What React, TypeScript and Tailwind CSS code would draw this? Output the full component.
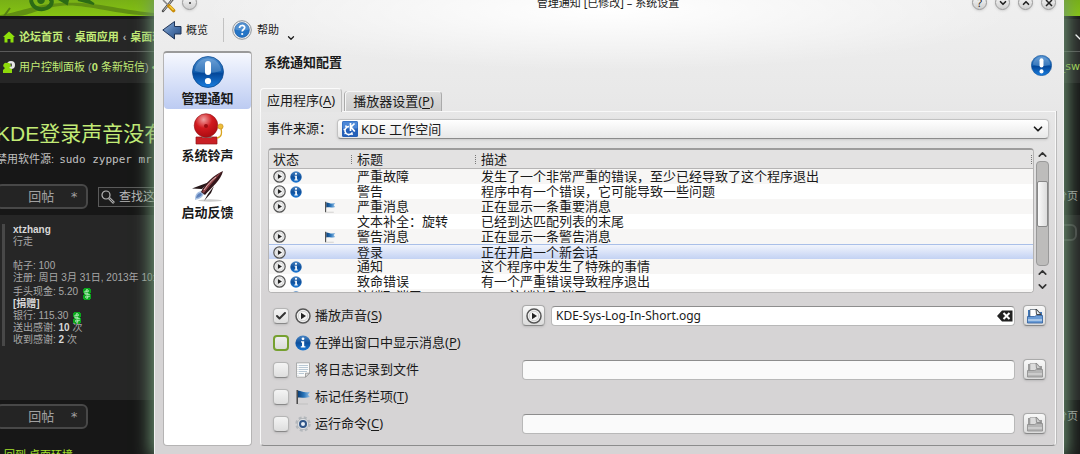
import { useState, type ReactNode } from "react";
import { ChevronDown, ChevronUp, Check } from "lucide-react";

const uiFont = "font-['Noto_Sans','Noto_Sans_CJK_SC',sans-serif]";
const webFont = "font-['Liberation_Sans','Noto_Sans_CJK_SC',sans-serif]";

function AlertIcon({ className }: { className: string }) {
  return (
    <svg viewBox="0 0 32 32" className={className} aria-hidden="true">
      <defs>
        <linearGradient id="alertBlue" x1="0" y1="0" x2="0" y2="1">
          <stop offset="0" stopColor="#4f8fd0" />
          <stop offset="0.5" stopColor="#0f5cae" />
          <stop offset="0.55" stopColor="#05489a" />
          <stop offset="1" stopColor="#1a7fe0" />
        </linearGradient>
      </defs>
      <circle cx="16" cy="16" r="15.5" fill="url(#alertBlue)" stroke="#0d4a90" strokeWidth="0.8" />
      <path d="M3 15a13 12.5 0 0 1 26 0q-13 4-26 0z" fill="#fff" opacity="0.18" />
      <rect x="13" y="5" width="6" height="14" rx="3" fill="#fff" />
      <circle cx="16" cy="25" r="3.1" fill="#fff" />
    </svg>
  );
}

function InfoIcon({ className }: { className: string }) {
  return (
    <svg viewBox="0 0 16 16" className={className} aria-hidden="true">
      <defs>
        <linearGradient id="infoBlue" x1="0" y1="0" x2="0" y2="1">
          <stop offset="0" stopColor="#4a86c4" />
          <stop offset="0.5" stopColor="#0d4f9c" />
          <stop offset="1" stopColor="#1b79d6" />
        </linearGradient>
      </defs>
      <circle cx="8" cy="8" r="7.6" fill="url(#infoBlue)" />
      <circle cx="8" cy="3.8" r="1.4" fill="#fff" />
      <path d="M6 6.2h3.2v5h1.2v1.3H5.8v-1.3H7V7.4H6z" fill="#fff" />
    </svg>
  );
}

function PlayIcon({ className }: { className: string }) {
  return (
    <svg viewBox="0 0 16 16" className={className} aria-hidden="true">
      <circle cx="8" cy="8" r="7" fill="#f4f4f4" stroke="#555" strokeWidth="1.5" />
      <circle cx="8" cy="8" r="4.8" fill="none" stroke="#c4c4c4" strokeWidth="0.8" />
      <path d="M6 4.8l5 3.2-5 3.2z" fill="#222" />
    </svg>
  );
}

function FlagIcon({ className }: { className: string }) {
  return (
    <svg viewBox="0 0 16 16" className={className} aria-hidden="true">
      <defs>
        <linearGradient id="flagBlue" x1="0" y1="0" x2="1" y2="0">
          <stop offset="0" stopColor="#0b3f78" />
          <stop offset="0.5" stopColor="#2a75ba" />
          <stop offset="1" stopColor="#9cc4e8" />
        </linearGradient>
      </defs>
      <path d="M3 1.5c4 1 6 2.5 12 1.2l-2 3 2 2.3C9.500 9.500 7 8 3 8.500z" fill="url(#flagBlue)" />
      <path d="M2.200 1v14" stroke="#333" strokeWidth="1.300" />
      <path d="M3 15h10" stroke="#bbb" strokeWidth="0.800" />
    </svg>
  );
}

function NoteIcon({ className }: { className: string }) {
  return (
    <svg viewBox="0 0 16 16" className={className} aria-hidden="true">
      <path d="M1.500 .8h13v10.400l-4 4h-9z" fill="#fbfbfb" stroke="#a5a5a5" strokeWidth="0.900" />
      <path d="M4 3.500h9M4 5.500h9M4 7.500h9M4 9.500h8M4 11.500h5" stroke="#a9bccb" strokeWidth="0.800" />
      <path d="M3 1v14" stroke="#c9d4dc" strokeDasharray="1 1" />
      <path d="M14.500 11.200h-4v4z" fill="#ddd" stroke="#888" strokeWidth="0.700" />
    </svg>
  );
}

function GearIcon({ className }: { className: string }) {
  return (
    <svg viewBox="0 0 16 16" className={className} aria-hidden="true">
      <circle cx="8" cy="8" r="6.300" fill="none" stroke="#b4b8bc" strokeWidth="2.800" strokeDasharray="2.800 2.150" />
      <circle cx="8" cy="8" r="5.600" fill="#dfe2e5" stroke="#a9adb2" strokeWidth="0.700" />
      <circle cx="8" cy="8" r="3" fill="#e8f0f8" stroke="#2f5688" strokeWidth="2" />
    </svg>
  );
}

function OpenIcon({ active }: { active: boolean }) {
  return (
    <svg viewBox="0 0 18 18" className="size-[18px]" aria-hidden="true">
      <path d="M2 3h3v9H2zM13 5h3v7h-3z" fill={active ? "#3f76b8" : "#9b9b9b"} />
      <path d="M4 2.500h7l4 5V12H4z" fill={active ? "#fff" : "#dcdcdc"} stroke={active ? "#52606e" : "#a2a2a2"} strokeWidth="0.700" />
      <path d="M10 2l5 5.500h-4.500z" fill={active ? "#e4edf5" : "#cfcfcf"} stroke={active ? "#333" : "#888"} strokeWidth="0.900" />
      <path d="M1.500 9.500h7l2-1h6v7.500h-15z" fill={active ? "#6b9cd6" : "#b5b5b5"} stroke={active ? "#2b5c9c" : "#8c8c8c"} strokeWidth="0.800" />
      <path d="M2 13h14" stroke={active ? "#e3effa" : "#e2e2e2"} />
    </svg>
  );
}

function BellIcon() {
  return (
    <svg viewBox="0 0 32 32" className="size-8" aria-hidden="true">
      <defs>
        <radialGradient id="bellRed" cx="0.400" cy="0.250" r="0.800">
          <stop offset="0" stopColor="#f0a0a0" />
          <stop offset="0.450" stopColor="#d21a1f" />
          <stop offset="1" stopColor="#a80a10" />
        </radialGradient>
      </defs>
      <path d="M4 24h21v7H4z" fill="#c92026" stroke="#8f1418" strokeWidth="0.700" />
      <path d="M12 20h6l2 5H10z" fill="#8a6a6a" />
      <path d="M25 25c5-1 5-5 4-10" fill="none" stroke="#d9a520" strokeWidth="1.300" />
      <circle cx="14" cy="12.500" r="11.800" fill="url(#bellRed)" stroke="#8f1418" strokeWidth="0.600" />
      <circle cx="14" cy="13" r="2" fill="#a00d12" />
      <circle cx="28.500" cy="13.500" r="2.600" fill="#edbd3b" stroke="#bd8412" strokeWidth="0.600" />
    </svg>
  );
}

function RocketIcon() {
  return (
    <svg viewBox="0 0 32 32" className="size-8" aria-hidden="true">
      <ellipse cx="18" cy="30.500" rx="12" ry="1.200" fill="#ccc" />
      <path d="M3 30c0-6 2-8 6-9l3 3c-2 4-5 5-9 6z" fill="#a9c1e2" />
      <path d="M4 28c1-4 3-5 5-5l1 2c-2 2-4 3-6 3z" fill="#5f82bb" />
      <path d="M10 19L0 18.500l8-3 8-3zM16 24l-4 7 7-8 3-7z" fill="#241517" />
      <path d="M9 22C13 13 22 5 31 1 29 10 20 17 13 25z" fill="#34161a" />
      <path d="M10 22C14 14 22 7 30 1.500 23 10 17 16 12 23z" fill="#8e4347" />
      <path d="M12 20c4-6 8-10 12-13" stroke="#dcb9b9" strokeWidth="1" fill="none" />
    </svg>
  );
}

function BackIcon() {
  return (
    <svg viewBox="0 0 20 20" className="size-5" aria-hidden="true">
      <defs>
        <linearGradient id="backBlue" x1="0" y1="0" x2="1" y2="1">
          <stop offset="0" stopColor="#9fb9d9" />
          <stop offset="0.500" stopColor="#4f78ae" />
          <stop offset="1" stopColor="#27497d" />
        </linearGradient>
      </defs>
      <path d="M.8 10L12.500 1.500v5h6.500v7.500h-6.500v5z" fill="url(#backBlue)" stroke="#1f3559" strokeWidth="1" strokeLinejoin="round" />
    </svg>
  );
}

function HelpIcon() {
  return (
    <svg viewBox="0 0 20 20" className="size-5" aria-hidden="true">
      <circle cx="10" cy="10" r="9.300" fill="#f2f2f2" stroke="#8c9298" strokeWidth="1" />
      <circle cx="10" cy="10" r="7.400" fill="#2575c6" stroke="#1a569c" strokeWidth="0.600" />
      <path d="M3 9.500a7 7 0 0 1 14 0q-7 2-14 0z" fill="#fff" opacity="0.200" />
      <path d="M7.500 8c0-3.400 5.200-3.200 5.200-.4 0 1.900-2.500 1.900-2.500 4" fill="none" stroke="#fff" strokeWidth="1.700" />
      <circle cx="10.200" cy="14" r="1.100" fill="#fff" />
    </svg>
  );
}

function KdeIcon() {
  return (
    <svg viewBox="0 0 16 16" className="size-4 shrink-0" aria-hidden="true">
      <rect width="16" height="16" rx="1.500" fill="#2560b8" />
      <rect x=".5" y=".5" width="15" height="7" rx="1" fill="#4c87d6" />
      <path d="M7 5.500a4 4 0 1 0 3.500 6" fill="none" stroke="#fff" strokeWidth="1.500" />
      <path d="M3.500 4.500l1 1.500M1.500 8.500h1.500M2.500 13l1.500-1M6.500 14.500V13M10.500 14l-.7-1.200" stroke="#fff" strokeWidth="1.400" />
      <path d="M8.500 2v8M12.500 2.500L9 6l3.800 4.500" stroke="#fff" strokeWidth="1.700" fill="none" />
    </svg>
  );
}

function ToolsIcon() {
  return (
    <svg viewBox="0 0 16 16" className="size-4" aria-hidden="true">
      <path d="M13 2L3 14" stroke="#4a4a4a" strokeWidth="2.400" strokeLinecap="round" />
      <path d="M12.500 2.500l-9 11" stroke="#c9c9c9" strokeWidth="1" />
      <path d="M3 3l6 6" stroke="#888" strokeWidth="1.600" />
      <path d="M9 9l4.500 4.500" stroke="#c98c08" strokeWidth="3.600" strokeLinecap="round" />
      <path d="M9.500 9l4 4" stroke="#f7cf3e" strokeWidth="1.500" />
    </svg>
  );
}

function CashIcon() {
  return (
    <svg viewBox="0 0 8 12" className="-my-1 ml-0.5 inline-block h-3 w-2 align-[-1px]" aria-hidden="true">
      <path d="M1 0h6v1h1v4H7v1h1v5H7v1H1v-1H0V7h1V5H0V1h1z" fill="#0aa51c" />
      <path d="M6 3H2v3h4v3H2M4 1v10" fill="none" stroke="#e8ffe8" strokeWidth="1" strokeDasharray="1.500 .6" />
    </svg>
  );
}

function ReplyButton() {
  return (
    <button className="flex h-[25px] w-[92px] items-center justify-end gap-4 rounded-md border-2 border-[#484848] bg-[#242424] pr-2 text-[13px] text-[#a0a0a0]">
      回帖 <span className="font-['DejaVu_Sans_Mono',monospace]">*</span>
    </button>
  );
}

function ForumPage() {
  return (
    <div className={`flex h-full flex-col bg-[#171717] text-[#a8a8a8] ${webFont}`}>
      <div className="h-4 shrink-0 overflow-hidden bg-gradient-to-b from-[#78b016] to-[#86c412]">
        <svg viewBox="0 0 154 16" className="h-4 w-[154px]" aria-hidden="true">
          <path d="M0 15C20 12 32 5 60 3c34-2 50 5 94 10v3C110 14 84 3 60 6 36 9 32 15 18 16H0z" fill="#608f12" />
          <path d="M31 0c1 8 9 11 16 8 6-3 6-9 2-9" fill="none" stroke="#2c6b15" strokeWidth="4" />
          <path d="M38 0c1 4 5 4 6 0M60 0l7 4 1-4zM78 0l16 4-6-4z" stroke="#2c6b15" strokeWidth="2" fill="#2c6b15" />
          <path d="M4 16l6-8" stroke="#557f13" strokeWidth="2" />
        </svg>
      </div>
      <div className="mt-[3px] flex h-16 shrink-0 flex-col bg-[#262626] text-[11px] text-[#c2eb76]">
        <div className="flex items-center justify-between border-b border-[#5a5a5a] pt-1">
          <nav className="ml-[3px] flex h-7 items-center gap-1 font-bold whitespace-nowrap">
            <svg viewBox="0 0 12 12" className="size-3" aria-hidden="true">
              <path d="M6 .5l6 5.500h-1.500v5.500h-3V8h-3v3.500h-3V6H0z" fill="#8ee00b" />
            </svg>
            <a href="#forum">论坛首页</a>
            <span className="text-[#aaa]">‹</span>
            <a href="#desktop">桌面应用</a>
            <span className="text-[#aaa]">‹</span>
            <a href="#environment">桌面环境</a>
          </nav>
          <ChevronDown className="-mr-2 size-4 text-white" />
        </div>
        <div className="flex h-[30px] items-center justify-between whitespace-nowrap">
          <div className="ml-[3px] flex items-center gap-1">
            <svg viewBox="0 0 12 12" className="size-3" aria-hidden="true">
              <circle cx="8" cy="4" r="4" fill="#e6e6e6" />
              <path d="M8 2.500v3" stroke="#222" strokeWidth="1.500" />
              <path d="M4 2a2.600 2.600 0 0 1 2 5l3 1v4H0V9l2-2a2.600 2.600 0 0 1 2-5z" fill="#8ed90b" />
            </svg>
            <a href="#panel">
              用户控制面板 <span className="text-[#aaa]">(</span><b>0</b> 条新短信<span className="text-[#aaa]">)</span> •
            </a>
          </div>
          <span className="font-['DejaVu_Sans',sans-serif] text-[#a5d955]">_sw</span>
        </div>
      </div>
      <h1 className="mt-9 -ml-1 shrink-0 text-[21px] leading-[30px] text-[#c2eb76] whitespace-nowrap">KDE登录声音没有了</h1>
      <p className="-ml-1 mt-0.5 shrink-0 text-[11px] leading-4 text-[#c0c0c0] whitespace-nowrap">
        禁用软件源: <code className="ml-0.5 font-['DejaVu_Sans_Mono',monospace] text-[11px]">sudo zypper mr</code>
      </p>
      <div className="mt-4 -ml-1 flex h-[25px] shrink-0 items-center justify-between">
        <div className="flex items-center gap-[10px]">
          <ReplyButton />
          <label className="flex h-5 w-28 items-center gap-1 border border-[#5a5a5a] bg-[#1c1c1c] px-0.5 text-xs">
            <svg viewBox="0 0 14 14" className="size-3.5 shrink-0" fill="none" aria-hidden="true">
              <circle cx="5" cy="5" r="4" stroke="#b8b8b8" strokeWidth="1.200" />
              <path d="M8 8l5 5" stroke="#a8a8a8" strokeWidth="2.600" />
              <path d="M8.500 8.500l4 4" stroke="#333" strokeWidth="0.800" />
            </svg>
            <input type="text" placeholder="查找这个主题" className="w-full bg-transparent placeholder:text-[#b8b8b8] focus:outline-none" />
          </label>
        </div>
        <span className="pr-0.5 text-[11px]">1 分页</span>
      </div>
      <article className="mt-[6px] flex h-[185px] shrink-0 items-start justify-between bg-[#262626] pt-[9px]">
        <div className="ml-0.5 border-l-[3px] border-[#484848] pl-2 text-[10px] leading-3 whitespace-nowrap">
          <b className="block text-[#d8d8d8]">xtzhang</b>
          <div>行走</div>
          <div className="mt-3">帖子: 100</div>
          <div>注册: 周日 3月 31日, 2013年 10:12</div>
          <div className="pt-0.5">手头现金: 5.20 <CashIcon /></div>
          <b className="block text-[#d8d8d8]">[捐赠]</b>
          <div>银行: 115.30 <CashIcon /></div>
          <div>送出感谢: <b className="text-[#d8d8d8]">10</b> 次</div>
          <div>收到感谢: <b className="text-[#d8d8d8]">2</b> 次</div>
        </div>
        <button aria-label="引用" className="mr-[3px] h-[17px] w-10 rounded-md border-2 border-[#484848]" />
      </article>
      <div className="mt-1 -ml-1 flex shrink-0 items-center justify-between">
        <ReplyButton />
        <span className="pr-0.5 text-[11px]">1 分页</span>
      </div>
      <a href="#back" className="mt-[18px] ml-1 shrink-0 text-[11px] leading-4 text-[#a5e02d]">回到 桌面环境</a>
    </div>
  );
}

function RoundButton({ label, children }: { label: string; children: ReactNode }) {
  return (
    <button aria-label={label} className="flex size-[15px] items-center justify-center rounded-full border border-[#999] bg-gradient-to-b from-[#fafafa] to-[#cfcfcf] text-[11px] leading-none text-[#222] shadow-sm">
      {children}
    </button>
  );
}

const modules = [
  { label: "管理通知", icon: <AlertIcon className="size-8" /> },
  { label: "系统铃声", icon: <BellIcon /> },
  { label: "启动反馈", icon: <RocketIcon /> },
];

const events = [
  { play: true, info: true, flag: false, title: "严重故障", text: "发生了一个非常严重的错误，至少已经导致了这个程序退出" },
  { play: true, info: true, flag: false, title: "警告", text: "程序中有一个错误，它可能导致一些问题" },
  { play: true, info: false, flag: true, title: "严重消息", text: "正在显示一条重要消息" },
  { play: false, info: false, flag: false, title: "文本补全：旋转", text: "已经到达匹配列表的末尾" },
  { play: true, info: false, flag: true, title: "警告消息", text: "正在显示一条警告消息" },
  { play: true, info: false, flag: false, title: "登录", text: "正在开启一个新会话" },
  { play: true, info: true, flag: false, title: "通知", text: "这个程序中发生了特殊的事情" },
  { play: true, info: true, flag: false, title: "致命错误", text: "有一个严重错误导致程序退出" },
  { play: false, info: true, flag: false, title: "注销取消了", text: "KDE 注销被取消了" },
];

function EventTable() {
  const [selected, setSelected] = useState(5);
  return (
    <div className="flex min-h-0 flex-1">
      <div className="min-w-0 flex-1 overflow-hidden rounded border border-t-2 border-[#b5b4b4] border-t-[#9d9c9c] bg-white">
        <table className="w-full table-fixed border-separate border-spacing-0 text-left">
          <colgroup>
            <col className="w-[84px]" />
            <col className="w-[124px]" />
            <col />
          </colgroup>
          <thead>
            <tr>
              {["状态", "标题", "描述"].map((h) => (
                <th key={h} className="h-[19px] border-b border-[#b5b4b4] bg-[#e3e2e2] pl-1 leading-[18px] font-normal">
                  <span className="flex items-center justify-between pr-px">
                    {h}
                    <span className="h-[9px] border-r border-dotted border-[#777]" />
                  </span>
                </th>
              ))}
            </tr>
          </thead>
          <tbody>
            {events.map((e, i) => {
              const on = i === selected;
              const cell = on
                ? "h-[15px] border-t border-[#a9bfe8] bg-gradient-to-b from-[#f1f4fc] to-[#c3d2f3] p-0 pl-1 leading-[14px]"
                : i % 2
                  ? "h-[15px] bg-white p-0 pl-1 leading-[15px]"
                  : "h-[15px] bg-[#f7f6f5] p-0 pl-1 leading-[15px]";
              return (
                <tr key={e.title} onClick={() => setSelected(i)} aria-selected={on}>
                  <td className={cell}>
                    <span className="grid grid-cols-[17px_34px_17px] items-center">
                      <span>{e.play && <PlayIcon className="size-[13px]" />}</span>
                      <span>{e.info && <InfoIcon className="size-3" />}</span>
                      <span>{e.flag && <FlagIcon className="size-3" />}</span>
                    </span>
                  </td>
                  <td className={`${cell} whitespace-nowrap`}>{e.title}</td>
                  <td className={`${cell} truncate`}>{e.text}</td>
                </tr>
              );
            })}
          </tbody>
        </table>
      </div>
      <div className="flex w-[15px] flex-col items-center pl-px text-[#333]">
        <button aria-label="向上" className="flex h-[13px] items-center"><ChevronUp className="size-[13px]" strokeWidth={3} /></button>
        <div className="w-[13px] flex-1 rounded border border-[#999] bg-[#bdbcbb] pt-[19px]">
          <div className="h-[46px] rounded-xs border border-[#888] bg-gradient-to-r from-[#fafafa] to-[#dcdcdc]" />
        </div>
        <button aria-label="向上一行" className="flex h-[13px] items-center"><ChevronUp className="size-[13px]" strokeWidth={3} /></button>
        <button aria-label="向下" className="flex h-[14px] items-center"><ChevronDown className="size-[13px]" strokeWidth={3} /></button>
      </div>
    </div>
  );
}

function Key({ k }: { k: string }) {
  return <>(<span className="underline underline-offset-2">{k}</span>)</>;
}

function OptionCheck({ id, icon, focused, defaultChecked, children }: {
  id: string;
  icon: ReactNode;
  focused?: boolean;
  defaultChecked?: boolean;
  children: ReactNode;
}) {
  return (
    <label htmlFor={id} className="flex h-[27px] w-[249px] shrink-0 items-center whitespace-nowrap">
      <span className="grid size-4 place-items-center">
        <input
          id={id}
          type="checkbox"
          defaultChecked={defaultChecked}
          className={
            focused
              ? "peer col-start-1 row-start-1 size-4 appearance-none rounded border-2 border-[#76a030] bg-gradient-to-b from-[#eee] to-[#dcdcdc]"
              : "peer col-start-1 row-start-1 size-4 appearance-none rounded border border-[#b5b5b5] border-b-[#888] bg-gradient-to-b from-[#f4f4f4] to-[#dedede] shadow-sm"
          }
        />
        <Check className="pointer-events-none invisible col-start-1 row-start-1 size-3 text-[#333] peer-checked:visible" strokeWidth={4} />
      </span>
      <span className="mr-1 ml-[6px]">{icon}</span>
      <span>{children}</span>
    </label>
  );
}

const fieldBox = "flex h-5 min-w-0 flex-1 items-center rounded border border-[#b8b8b8] border-t-[#8d8d8d]";
const squareButton = "flex h-[21px] w-[23px] shrink-0 items-center justify-center rounded border border-[#aaa] border-b-[#888] bg-gradient-to-b from-[#f8f8f8] to-[#dcdcdc] shadow-sm";

function PathField({ label }: { label: string }) {
  return (
    <>
      <div className={`${fieldBox} bg-[#fafafa]`}>
        <input type="text" disabled aria-label={label} className="w-full bg-transparent px-1" />
      </div>
      <button disabled aria-label="打开文件" className={`${squareButton} ml-2`}><OpenIcon active={false} /></button>
    </>
  );
}

function SettingsWindow() {
  return (
    <section
      className={`absolute inset-y-0 right-4 left-[154px] flex flex-col border-x border-x-[#f2f2f2] bg-[radial-gradient(ellipse_45%_60px_at_50%_10px,#ffffff,#ffffff00),linear-gradient(to_bottom,#efefef,#e9e9e9_20%,#d6d4d5_65%)] pb-2 text-[13px] text-[#1a1a1a] shadow-[0_0_16px_3px_#6f9675] ${uiFont}`}
    >
      <div className="flex h-[13px] shrink-0 items-end pr-[7px] pl-[5px]">
        <div className="flex flex-1 items-end gap-1.5">
          <ToolsIcon />
          <span className="pb-[3px]"><RoundButton label="固定"><span className="size-0.5 rounded-full bg-[#333]" /></RoundButton></span>
        </div>
        <h1 className="pb-0.5 text-[11px] leading-4">管理通知 [已修改] – 系统设置</h1>
        <div className="flex flex-1 justify-end gap-2 pb-[3px]">
          <RoundButton label="帮助">?</RoundButton>
          <RoundButton label="最小化"><ChevronDown className="size-2.5" strokeWidth={4} /></RoundButton>
          <RoundButton label="最大化"><ChevronUp className="size-2.5" strokeWidth={4} /></RoundButton>
          <RoundButton label="关闭">
            <svg viewBox="0 0 8 8" className="size-2"><path d="M1 1l6 6M7 1L1 7" stroke="#222" strokeWidth="1.500" /></svg>
          </RoundButton>
        </div>
      </div>
      <div className="flex h-[38px] shrink-0 items-center pb-1 pl-[7px] text-[11px]">
        <button className="flex items-center gap-1"><BackIcon />概览</button>
        <span className="mr-2 ml-[15px] h-6 w-px bg-[#c2c2c2]" />
        <button className="flex items-center gap-[5px]"><HelpIcon />帮助</button>
        <ChevronDown className="mt-4 ml-[7px] size-2.5" strokeWidth={3} />
      </div>
      <div className="flex min-h-0 flex-1 gap-2 pr-[7px] pl-2">
        <nav className="w-[89px] shrink-0 rounded border border-t-2 border-[#b5b4b4] border-t-[#9a9a9a] bg-white">
          {modules.map((m, i) => (
            <button
              key={m.label}
              className={
                i === 0
                  ? "flex h-14 w-full flex-col items-center rounded-sm bg-gradient-to-b from-[#f6f8fe] to-[#bccbf2] pt-[3px] font-bold"
                  : "flex h-[57px] w-full flex-col items-center pt-1 font-bold"
              }
            >
              {m.icon}
              <span className="leading-5">{m.label}</span>
            </button>
          ))}
        </nav>
        <main className="flex min-w-0 flex-1 flex-col">
          <header className="flex h-[37px] shrink-0 items-center justify-between pr-1 pl-1">
            <h2 className="pb-4 leading-5 font-bold">系统通知配置</h2>
            <AlertIcon className="mb-2 size-[21px]" />
          </header>
          <div role="tablist" className="z-10 flex shrink-0 items-end">
            <button role="tab" aria-selected="true" className="-mb-px h-[24px] rounded-t border border-b-0 border-[#fbfbfb] border-r-[#bbb] bg-[#e5e5e5] px-[6px]">
              应用程序<Key k="A" />
            </button>
            <button role="tab" aria-selected="false" className="ml-[3px] h-[20px] rounded-t border border-b-0 border-[#f6f6f6] border-r-[#aaa] bg-gradient-to-b from-[#dedede] to-[#cbcbcb] px-[7px] leading-[19px] shadow-[-1px_0_0_#aaa]">
              播放器设置<Key k="P" />
            </button>
          </div>
          <div className="flex min-h-0 flex-1 flex-col rounded-b border border-[#f8f8f8] border-b-[#8c8c8c] px-[6px] pt-[7px] pb-[8px] shadow-[1px_0_0_#bbb]">
            <div className="flex shrink-0 items-center">
              <label htmlFor="source" className="w-[70px] whitespace-nowrap">事件来源：</label>
              <div className="grid h-5 flex-1 grid-cols-[24px_1fr_20px] items-center rounded border border-[#c2c2c2] border-b-[#8b8b8b] bg-gradient-to-b from-white to-[#e8e8e8] shadow-sm">
                <span className="col-start-1 row-start-1 pl-1"><KdeIcon /></span>
                <select id="source" className="col-span-3 col-start-1 row-start-1 h-[18px] appearance-none bg-transparent pl-[23px] leading-[18px]">
                  <option>KDE 工作空间</option>
                </select>
                <ChevronDown className="pointer-events-none col-start-3 row-start-1 ml-[3px] size-3.5" strokeWidth={3} />
              </div>
            </div>
            <div className="mt-[9px] flex min-h-0 flex-1 flex-col pl-px">
              <EventTable />
            </div>
            <form className="mt-[9px] flex shrink-0 flex-col pr-[3px] pl-1.5">
              <div className="flex items-center">
                <OptionCheck id="sound" defaultChecked icon={<PlayIcon className="size-4" />}>播放声音<Key k="S" /></OptionCheck>
                <button type="button" aria-label="播放" className={squareButton}><PlayIcon className="size-4" /></button>
                <div className={`${fieldBox} ml-[6px] bg-white`}>
                  <input type="text" aria-label="声音文件" defaultValue="KDE-Sys-Log-In-Short.ogg" className="min-w-0 flex-1 bg-transparent px-1 text-xs focus:outline-none" />
                  <button type="button" aria-label="清除" className="mr-px">
                    <svg viewBox="0 0 16 12" className="h-3 w-4">
                      <path d="M0 6l5-5.500h10.500v11H5z" fill="#222" />
                      <path d="M6.500 3l6 6M12.500 3l-6 6" stroke="#fff" strokeWidth="2" />
                    </svg>
                  </button>
                </div>
                <button type="button" aria-label="打开文件" className={`${squareButton} ml-2`}><OpenIcon active /></button>
              </div>
              <OptionCheck id="popup" focused icon={<InfoIcon className="size-4" />}>在弹出窗口中显示消息<Key k="P" /></OptionCheck>
              <div className="flex items-center">
                <OptionCheck id="log" icon={<NoteIcon className="size-4" />}>将日志记录到文件</OptionCheck>
                <PathField label="日志文件" />
              </div>
              <OptionCheck id="taskbar" icon={<FlagIcon className="size-4" />}>标记任务栏项<Key k="T" /></OptionCheck>
              <div className="flex items-center">
                <OptionCheck id="command" icon={<GearIcon className="size-4" />}>运行命令<Key k="C" /></OptionCheck>
                <PathField label="命令" />
              </div>
            </form>
          </div>
        </main>
      </div>
    </section>
  );
}

export default function App() {
  return (
    <div className="relative h-screen overflow-hidden">
      <ForumPage />
      <SettingsWindow />
    </div>
  );
}
